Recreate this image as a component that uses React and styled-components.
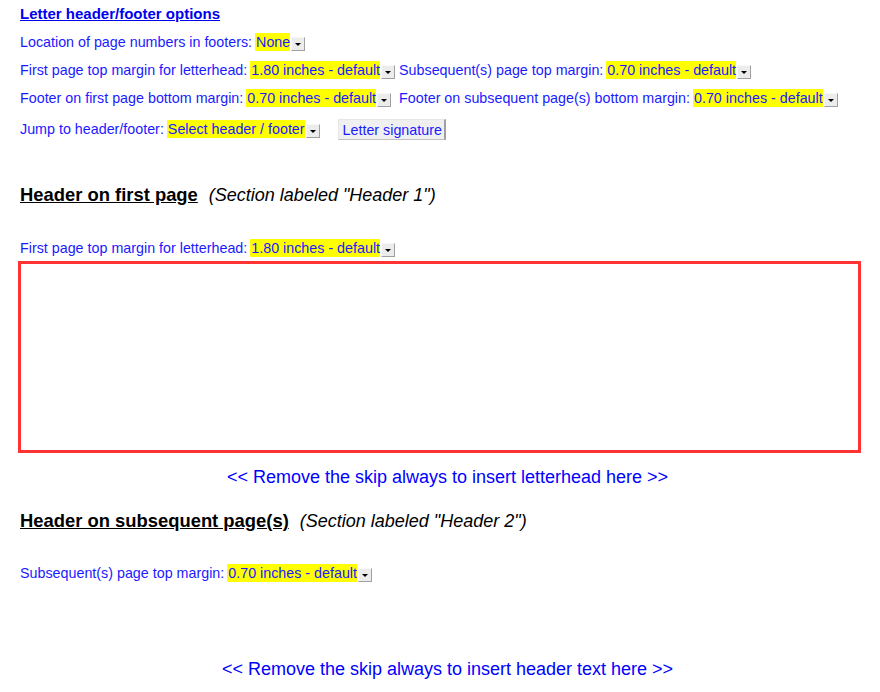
import React from "react";
import styled, { createGlobalStyle } from "styled-components";

const Global = createGlobalStyle`
  html, body { margin: 0; padding: 0; background: #fff; }
  body { font-family: "Liberation Sans", Arial, sans-serif; }
`;

const Page = styled.div`
  padding: 5px 19px 0 20px;
  width: 880px;
  box-sizing: border-box;
  color: #1a1aff;
  font-size: 14.3px;
`;

const Title = styled.div`
  font-weight: bold;
  font-size: 15px;
  color: #0000ee;
  text-decoration: underline;
  line-height: 17px;
  margin-bottom: 11px;
`;

const Row = styled.div`
  display: flex;
  align-items: flex-end;
  height: 18px;
  margin-top: ${(p) => p.$top ?? 0}px;
  margin-bottom: ${(p) => p.$gap ?? 10}px;
  white-space: pre;
  line-height: 17px;
`;

const Label = styled.span`
  margin-right: 3px;
`;

const SelectWrap = styled.span`
  display: inline-flex;
  align-items: flex-end;
  margin-right: ${(p) => p.$after ?? 0}px;
`;

const SelectValue = styled.span`
  background: #ffff00;
  line-height: 18px;
  height: 18px;
  padding: 0 0 0 1px;
  color: #1a1aff;
`;

const Arrow = styled.span`
  width: 14px;
  height: 14px;
  box-sizing: border-box;
  background: #ececec;
  border-top: 1px solid #f8f8f8;
  border-left: 1px solid #f8f8f8;
  border-right: 1px solid #a0a0a0;
  border-bottom: 1px solid #a0a0a0;
  display: inline-flex;
  align-items: center;
  justify-content: center;
  margin-left: 1px;
  &::after {
    content: "";
    border-left: 3px solid transparent;
    border-right: 3px solid transparent;
    border-top: 3px solid #000;
  }
`;

const Button = styled.button`
  font-family: "Liberation Sans", Arial, sans-serif;
  font-size: 14.3px;
  color: #1a1aff;
  background: #f0f0f0;
  border-top: 1px solid #e6e6e6;
  border-left: 1px solid #e6e6e6;
  border-right: 2px solid #a0a0a0;
  border-bottom: 1px solid #c0c0c0;
  height: 21px;
  padding: 0 2px 0 4px;
  margin: 0 0 -2px 18px;
  line-height: 18px;
`;

const Heading = styled.div`
  display: flex;
  align-items: baseline;
  margin-top: ${(p) => p.$top}px;
  font-size: 18px;
  line-height: 21px;
`;

const HeadingMain = styled.span`
  font-weight: bold;
  font-size: 18.4px;
  color: #000;
  text-decoration: underline;
  margin-right: 11px;
`;

const HeadingNote = styled.span`
  font-style: italic;
  color: #000;
`;

const LetterBox = styled.div`
  margin-left: -2px;
  height: 192px;
  box-sizing: border-box;
  border: 3px solid #ff3333;
`;

const Notice = styled.div`
  font-size: 18px;
  line-height: 21px;
  color: #0000ff;
  text-align: center;
  padding-left: ${(p) => p.$shift}px;
  margin-top: ${(p) => p.$top}px;
`;

function Select({ value, after }) {
  return (
    <SelectWrap $after={after}>
      <SelectValue>{value}</SelectValue>
      <Arrow />
    </SelectWrap>
  );
}

export default function App() {
  return (
    <>
      <Global />
      <Page>
        <Title>Letter header/footer options</Title>
        <Row>
          <Label>Location of page numbers in footers:</Label>
          <Select value="None" />
        </Row>
        <Row>
          <Label>First page top margin for letterhead:</Label>
          <Select value="1.80 inches - default" after={4} />
          <Label>Subsequent(s) page top margin:</Label>
          <Select value="0.70 inches - default" />
        </Row>
        <Row $gap={13}>
          <Label>Footer on first page bottom margin:</Label>
          <Select value="0.70 inches - default" after={8} />
          <Label>Footer on subsequent page(s) bottom margin:</Label>
          <Select value="0.70 inches - default" />
        </Row>
        <Row $gap={0}>
          <Label>Jump to header/footer:</Label>
          <Select value="Select header / footer" />
          <Button>Letter signature</Button>
        </Row>

        <Heading $top={46}>
          <HeadingMain>Header on first page</HeadingMain>
          <HeadingNote>(Section labeled "Header 1")</HeadingNote>
        </Heading>
        <Row $gap={4} $top={33}>
          <Label>First page top margin for letterhead:</Label>
          <Select value="1.80 inches - default" />
        </Row>
        <LetterBox />
        <Notice $shift={14} $top={14}>
          &lt;&lt; Remove the skip always to insert letterhead here &gt;&gt;
        </Notice>

        <Heading $top={22}>
          <HeadingMain>Header on subsequent page(s)</HeadingMain>
          <HeadingNote>(Section labeled "Header 2")</HeadingNote>
        </Heading>
        <Row $gap={0} $top={32}>
          <Label>Subsequent(s) page top margin:</Label>
          <Select value="0.70 inches - default" />
        </Row>
        <Notice $shift={14} $top={77}>
          &lt;&lt; Remove the skip always to insert header text here &gt;&gt;
        </Notice>
      </Page>
    </>
  );
}
